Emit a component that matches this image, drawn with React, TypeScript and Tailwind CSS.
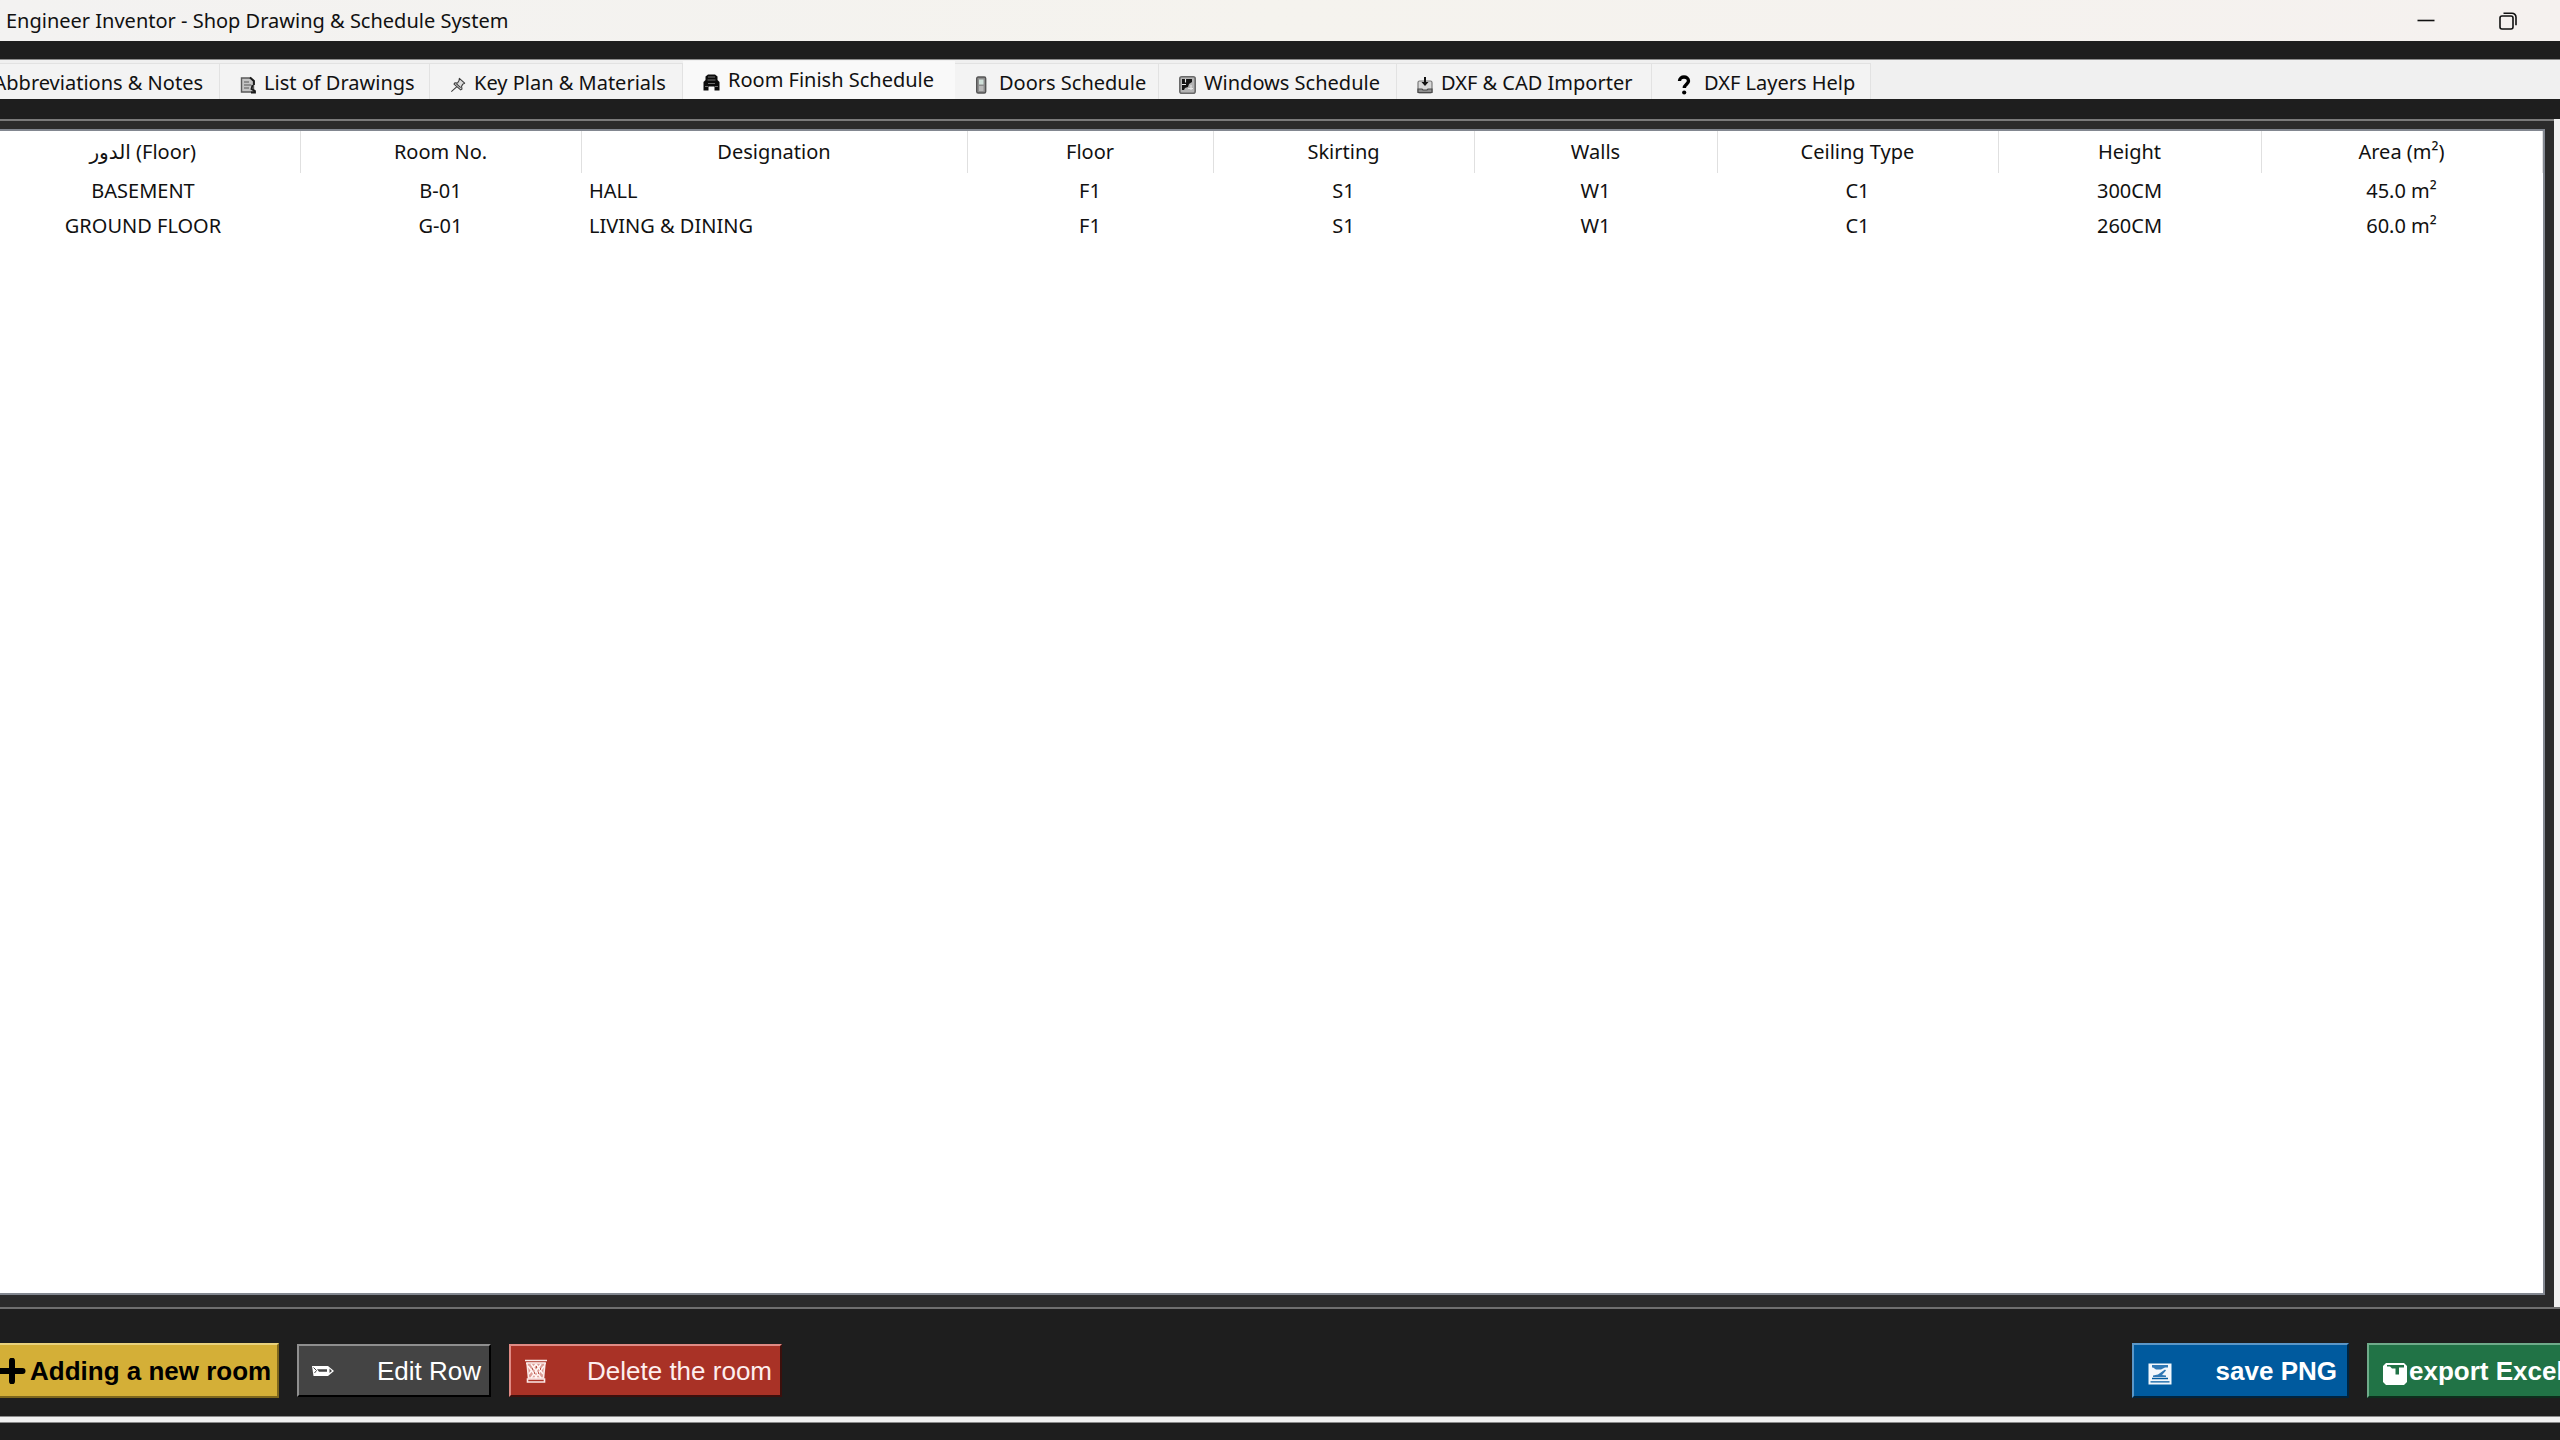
import type { ReactNode } from "react";

function NotebookIcon() {
  return (
    <svg viewBox="0 0 16 18" className="h-[18px] w-4 shrink-0" fill="none" aria-hidden="true">
      <path d="M1.500 2h9l3 3v11h-12z" fill="#c4c4c4" stroke="#5a5a5a" strokeWidth="1.400" />
      <path d="M10 1.500l4 3.500v4M12.500 9l-1 4 3.500 2v1.500h-4" stroke="#1a1a1a" strokeWidth="1.800" />
      <path d="M4 6h5M4 9h7M4 12h5" stroke="#7b7b7b" strokeWidth="1.400" />
    </svg>
  );
}

function PushpinIcon() {
  return (
    <svg viewBox="0 0 18 18" className="h-[18px] w-4 shrink-0" fill="none" aria-hidden="true">
      <path
        d="M10.500 1.500l6 5.500-2 1-1.500 2.500.5 3-1.500 1L4.500 8l1-1.500 3 .2L10.200 4z"
        fill="#dcdcdc"
        stroke="#3c3c3c"
        strokeWidth="1.200"
        strokeLinejoin="round"
      />
      <path d="M7.500 11L1.500 16.500M7 7.500l5 4.500" stroke="#3c3c3c" strokeWidth="1.200" />
    </svg>
  );
}

function BuildingIcon() {
  return (
    <svg viewBox="0 0 17 17" className="h-[17px] w-[17px] shrink-0" aria-hidden="true">
      <path d="M5 0.500h7l2.500 2v3.500l2 2v8.500h-5v-4h-6v4h-5V8l2-2V2.500z" fill="#0c0c0c" />
      <path d="M5 3h7M4.500 6h8M5 9.500h7M2 12.500h3M12 12.500h3" stroke="#6e6e6e" strokeWidth="1" />
    </svg>
  );
}

function DoorIcon() {
  return (
    <svg viewBox="0 0 16 18" className="h-[18px] w-4 shrink-0" aria-hidden="true">
      <rect x="1.700" y="1" width="9" height="16" rx="1.500" fill="#8d8d8d" stroke="#555" strokeWidth="1.400" />
      <rect x="4" y="3.500" width="4.500" height="5" fill="#cfe0d9" />
      <rect x="4" y="10" width="4.500" height="5" fill="#b9b9b9" />
    </svg>
  );
}

function WindowIcon() {
  return (
    <svg viewBox="0 0 17 18" className="h-[18px] w-[17px] shrink-0" aria-hidden="true">
      <rect x="0.800" y="0.800" width="15.400" height="16.400" rx="2" fill="#b4b4b4" stroke="#6a6a6a" strokeWidth="1.600" />
      <path d="M3 3h10v3l-3 2-1 3-3 1-1 2H3z" fill="#141414" />
      <path d="M6.500 3v3.500M3 8.500h4M12 9v5M9 12.500h5" stroke="#e6e6e6" strokeWidth="1.100" />
    </svg>
  );
}

function InboxIcon() {
  return (
    <svg viewBox="0 0 16 18" className="h-[18px] w-4 shrink-0" fill="none" aria-hidden="true">
      <rect x="1" y="5" width="14" height="12" rx="1.500" fill="#d8d8d8" stroke="#7a7a7a" strokeWidth="1.200" />
      <path d="M1 13h4l1 1h4l1-1h4v3.500H1z" fill="#8f8f8f" stroke="#4a4a4a" strokeWidth="1.200" />
      <path d="M8 1v7" stroke="#111" strokeWidth="2" />
      <path d="M4.500 6L8 10 11.500 6z" fill="#111" />
    </svg>
  );
}

function QuestionIcon() {
  return (
    <svg viewBox="0 0 14 20" className="h-5 w-4 shrink-0" fill="none" aria-hidden="true">
      <path d="M2.500 6C2.500 0.700 11.500 0.700 11.500 6c0 3-4.200 3.500-4.200 7" stroke="#000" strokeWidth="3.400" />
      <circle cx="7.200" cy="17.500" r="2.100" fill="#000" />
    </svg>
  );
}

function PlusIcon() {
  return (
    <svg viewBox="0 0 26 26" className="h-[26px] w-[26px] shrink-0" aria-hidden="true">
      <path d="M12 2.700v20.600M0 13h22.500" stroke="#000" strokeWidth="6" strokeLinecap="round" />
    </svg>
  );
}

function PencilIcon() {
  return (
    <svg viewBox="0 0 24 12" className="h-3 w-6 shrink-0" fill="none" aria-hidden="true">
      <path d="M1 1h16l6 5-6 5H2.500z" fill="#fff" />
      <path d="M6 4.200h10v2.600H8zM18.500 3.500l2.500 2.500-2.500 2z" fill="#444" />
      <path d="M2.500 2.500l3 3-2 2.500" stroke="#444" strokeWidth="1" />
    </svg>
  );
}

function WastebasketIcon() {
  return (
    <svg viewBox="0 0 22 24" className="h-6 w-[22px] shrink-0" fill="none" aria-hidden="true">
      <path d="M0 1.500h22M1 4.500h20" stroke="#fbe9e7" strokeWidth="1.600" />
      <path d="M2 4l1.500 15h15L20 4z" fill="#dc9d96" stroke="#fbe9e7" strokeWidth="1.600" />
      <path d="M2.500 20h17v3h-17z" stroke="#fbe9e7" strokeWidth="1.600" />
      <path
        d="M6 5l10 14M11 5l7 10M3 7l9 12M16 5L6 19M11 5l-7 10M19 7l-9 12"
        stroke="#fff5f3"
        strokeWidth="1.500"
      />
      <path d="M7 10h1M11 8h1M15 10h1M9 14h1M13 14h1" stroke="#a93226" strokeWidth="1.600" />
    </svg>
  );
}

function DiskImageIcon() {
  return (
    <svg viewBox="0 0 24 22" className="h-[22px] w-6 shrink-0" fill="none" aria-hidden="true">
      <rect x="0.500" y="0.500" width="23" height="21" fill="#f2f7fc" />
      <path d="M4 2h16v2.500h-3l-4 2H8L5 4.500H4zM5 12.500l5-1 7-5 1 1-4 4.500 4 .5v1.500H5z" fill="#2f78b5" />
      <path d="M4 15.500h16M2.500 18.800h19" stroke="#005a9e" strokeWidth="1.300" />
    </svg>
  );
}

function SheetIcon() {
  return (
    <svg viewBox="0 0 24 22" className="h-[22px] w-6 shrink-0" aria-hidden="true">
      <path d="M3 0h18l3 3v16l-3 3H3l-3-3V3z" fill="#fff" />
      <path d="M4 2h17v2.500h-5v7h-3.500v-6H9L7 3.500H4z" fill="#217346" />
    </svg>
  );
}

type Tab = { label: string; icon: ReactNode; box: string };

const tabs: Tab[] = [
  { label: "Abbreviations & Notes", icon: null, box: "w-[220px] justify-end pr-4" },
  { label: "List of Drawings", icon: <NotebookIcon />, box: "w-[210px] pl-5" },
  { label: "Key Plan & Materials", icon: <PushpinIcon />, box: "w-[253px] pl-5" },
  { label: "Room Finish Schedule", icon: <BuildingIcon />, box: "w-[272px] pl-5" },
  { label: "Doors Schedule", icon: <DoorIcon />, box: "w-[204px] pl-5" },
  { label: "Windows Schedule", icon: <WindowIcon />, box: "w-[238px] pl-5" },
  { label: "DXF & CAD Importer", icon: <InboxIcon />, box: "w-[255px] pl-5" },
  { label: "DXF Layers Help", icon: <QuestionIcon />, box: "w-[219px] gap-3 pl-6" },
];

const columns = [
  { label: "Room No.", col: "w-[281px]" },
  { label: "Designation", col: "w-[386px]" },
  { label: "Floor", col: "w-[246px]" },
  { label: "Skirting", col: "w-[261px]" },
  { label: "Walls", col: "w-[243px]" },
  { label: "Ceiling Type", col: "w-[281px]" },
  { label: "Height", col: "w-[263px]" },
  { label: "Area (m²)", col: "w-[281px]" },
];

const rows = [
  ["BASEMENT", "B-01", "HALL", "F1", "S1", "W1", "C1", "300CM", "45.0 m²"],
  ["GROUND FLOOR", "G-01", "LIVING & DINING", "F1", "S1", "W1", "C1", "260CM", "60.0 m²"],
];

function TitleBar() {
  return (
    <header className="flex h-[41px] shrink-0 items-center justify-between bg-gradient-to-r from-[#f3f2f1] via-[#f5f3ee] to-[#f5f1ef] pl-1.5 pr-[43px] text-[#111]">
      <h1 className="text-xl leading-6">Engineer Inventor - Shop Drawing &amp; Schedule System</h1>
      <div className="flex items-center gap-16">
        <button type="button" aria-label="Minimize">
          <svg viewBox="0 0 18 18" className="h-[18px] w-[18px]" fill="none">
            <path d="M0.500 8.500h17" stroke="#111" strokeWidth="1.600" />
          </svg>
        </button>
        <button type="button" aria-label="Restore">
          <svg viewBox="0 0 18 18" className="h-[18px] w-[18px]" fill="none" stroke="#111" strokeWidth="1.600">
            <rect x="1" y="4" width="13" height="13" rx="2" />
            <path d="M4.500 1.200h8.500a4 4 0 0 1 4 4v8" />
          </svg>
        </button>
      </div>
    </header>
  );
}

function TabStrip() {
  return (
    <nav
      role="tablist"
      aria-label="Sections"
      className="mt-[18px] flex h-10 shrink-0 items-end overflow-hidden border-t border-[#8c8c8c] bg-[#f0f0f0]"
    >
      {tabs.map((t) => {
        const active = t.label === "Room Finish Schedule";
        return (
          <button
            key={t.label}
            type="button"
            role="tab"
            aria-selected={active}
            className={`flex shrink-0 items-center gap-2 whitespace-nowrap border-r text-xl leading-6 text-[#111] ${
              active ? "h-[38px] border-[#f9f9f9] bg-[#f9f9f9]" : "h-9 border-t border-[#e2e2e2] bg-[#f3f3f3] pt-0.5"
            } ${t.box}`}
          >
            {t.icon && <span className="mt-1 flex">{t.icon}</span>}
            <span>{t.label}</span>
          </button>
        );
      })}
    </nav>
  );
}

function RoomTable() {
  return (
    <div className="mt-5 flex grow bg-[#f0f0f0]">
      <div className="grow border-t-2 border-[#7a7a7a] bg-[#2b2b2b] pb-3 pr-[9px] pt-2">
        <div className="h-full border-b-2 border-r-2 border-t-2 border-[#828790] bg-white">
          <table className="w-full table-fixed border-collapse text-center text-xl leading-6 text-[#111]">
            <colgroup>
              <col className="w-[300px]" />
              {columns.map((c) => (
                <col key={c.label} className={c.col} />
              ))}
            </colgroup>
            <thead>
              <tr className="h-[42px]">
                <th scope="col" className="border-r border-[#e0e0e0] pr-3.5 font-normal">
                  <span lang="ar" className="font-['DejaVu_Sans',sans-serif]">الدور</span> (Floor)
                </th>
                {columns.map((c) => (
                  <th key={c.label} scope="col" className="border-r border-[#e0e0e0] font-normal">
                    {c.label}
                  </th>
                ))}
              </tr>
            </thead>
            <tbody>
              {rows.map((r) => (
                <tr key={r[0]} className="h-[35px]">
                  {r.map((v, i) => (
                    <td key={i} className={i === 0 ? "pr-3.5" : i === 2 ? "pl-2 text-left" : "p-0"}>
                      {v}
                    </td>
                  ))}
                </tr>
              ))}
            </tbody>
          </table>
        </div>
      </div>
      <div className="w-[7px] shrink-0" />
    </div>
  );
}

function ActionBar() {
  return (
    <footer className="flex h-[109px] shrink-0 items-center justify-between overflow-hidden border-t-2 border-[#6f6f6f] bg-[#1e1e1e] pt-4 font-['Liberation_Sans',Arial,sans-serif] text-[26px] leading-8">
      <div className="flex shrink-0 items-center gap-[18px]">
        <button
          type="button"
          className="-ml-0.5 flex h-[55px] w-[281px] items-center gap-1 whitespace-nowrap border-2 border-b-[#7d661c] border-l-[#e9d27c] border-r-[#7d661c] border-t-[#e9d27c] bg-[#d4af37] font-bold text-black"
        >
          <PlusIcon />
          Adding a new room
        </button>
        <button
          type="button"
          className="flex h-[53px] w-[194px] items-center justify-between whitespace-nowrap border-2 border-b-black border-l-[#8f8f8f] border-r-black border-t-[#8f8f8f] bg-[#444444] pl-3 pr-2 text-white"
        >
          <PencilIcon />
          Edit Row
        </button>
        <button
          type="button"
          className="flex h-[53px] w-[273px] items-center justify-between whitespace-nowrap border-2 border-b-[#3c0f0c] border-l-[#e08a84] border-r-[#3c0f0c] border-t-[#e08a84] bg-[#a93226] pl-3.5 pr-2 text-[#fdeeee]"
        >
          <WastebasketIcon />
          Delete the room
        </button>
      </div>
      <div className="flex shrink-0 items-center gap-[18px] font-bold text-white">
        <button
          type="button"
          className="flex h-[55px] w-[217px] items-center justify-between whitespace-nowrap border-2 border-b-[#00243f] border-l-[#5b97c8] border-r-[#00243f] border-t-[#5b97c8] bg-[#005a9e] pl-3.5 pr-2.5"
        >
          <span className="mt-1.5 flex">
            <DiskImageIcon />
          </span>
          save PNG
        </button>
        <button
          type="button"
          className="-mr-4 flex h-[55px] w-[209px] items-center gap-0.5 whitespace-nowrap border-2 border-b-[#0d2e1c] border-l-[#6fab8a] border-r-[#0d2e1c] border-t-[#6fab8a] bg-[#217346] pl-3.5"
        >
          <span className="mt-1.5 flex">
            <SheetIcon />
          </span>
          export Excel
        </button>
      </div>
    </footer>
  );
}

export default function App() {
  return (
    <div className="flex min-h-screen flex-col overflow-hidden bg-[#1e1e1e] font-['Noto_Sans','Open_Sans',sans-serif]">
      <TitleBar />
      <TabStrip />
      <RoomTable />
      <ActionBar />
      <div className="mb-[17px] h-[7px] shrink-0 border-y border-[#8a8a8a] bg-[#f0f0f0]" />
    </div>
  );
}
